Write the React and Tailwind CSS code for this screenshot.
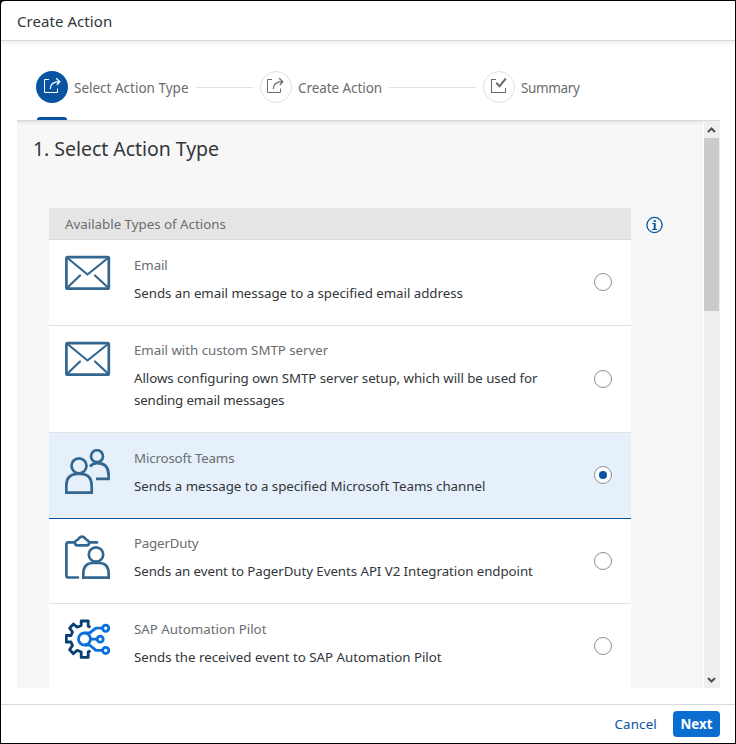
const rows = [
  { icon: 'mail', title: 'Email', lines: ['Sends an email message to a specified email address'], height: 'h-[86px]', pad: 'pt-[14px]', iconPad: 'pt-[15px]', radioPad: 'pt-[33px]', ts: 'tracking-[-0.1px]', ds: ['tracking-[-0.03px]'] },
  { icon: 'mail', title: 'Email with custom SMTP server', lines: ['Allows configuring own SMTP server setup, which will be used for', 'sending email messages'], height: 'h-[107px]', pad: 'pt-[13px]', iconPad: 'pt-[15px]', radioPad: 'pt-[44px]', ts: 'tracking-[-0.03px]', ds: ['tracking-[-0.06px]', 'tracking-[-0.14px]'] },
  { icon: 'teams', title: 'Microsoft Teams', lines: ['Sends a message to a specified Microsoft Teams channel'], height: 'h-[86px]', pad: 'pt-[14px]', iconPad: 'pt-4', radioPad: 'pt-[33px]', selected: true, ts: 'tracking-[-0.15px]', ds: ['tracking-[-0.03px]'] },
  { icon: 'duty', title: 'PagerDuty', lines: ['Sends an event to PagerDuty Events API V2 Integration endpoint'], height: 'h-[85px]', pad: 'pt-[13px]', iconPad: 'pt-[15px]', radioPad: 'pt-[33px]', ts: 'tracking-[-0.2px]', ds: ['tracking-[-0.06px]'] },
  { icon: 'pilot', title: 'SAP Automation Pilot', lines: ['Sends the received event to SAP Automation Pilot'], height: 'h-[84px]', pad: 'pt-[14px]', iconPad: 'pt-[15px]', radioPad: 'pt-[33px]', last: true, ts: 'tracking-normal', ds: ['tracking-normal'] },
];

function Mail() {
  return (
    <svg width="46" height="36" viewBox="0 0 46 36" fill="none" stroke="#346790" strokeWidth="2.7" strokeLinecap="round" strokeLinejoin="round">
      <rect x="1.4" y="2.2" width="42.4" height="31.4" rx="1.2" />
      <path d="M2.5 3 22.5 19.5 43 3M2.5 32.5 15 20.5M43 32.5 30 20.5" strokeWidth="2.2" />
    </svg>
  );
}

function Teams() {
  return (
    <svg width="46" height="46" viewBox="0 0 46 46" fill="none" stroke="#346790" strokeWidth="2.7">
      <circle cx="14" cy="16.8" r="7.5" />
      <path d="M1.3 43.6V37Q1.3 25 12 25H16Q26.7 25 26.7 37V43.6Z" />
      <circle cx="32" cy="7.2" r="6" />
      <path d="M25 17.5Q28 14.2 32 14.2Q43.6 14.2 43.6 26V29.8H31" />
    </svg>
  );
}

function Duty() {
  return (
    <svg width="46" height="46" viewBox="0 0 46 46" fill="none" stroke="#346790" strokeWidth="2.7" strokeLinecap="round">
      <path d="M13 43.5H3.5Q1.4 43.5 1.4 41.5V10.5Q1.4 8.4 3.5 8.4H9M25 8.4H32" />
      <path d="M10 8.5C10 6 13 6.5 14 4.2Q17 1 20 4.2C21 6.5 24.5 6 24 9Q24 11.4 21.5 11.4H12.5Q10 11.4 10 8.5Z" />
      <circle cx="31" cy="20.5" r="7.2" />
      <path d="M18.3 43.6V40Q18.3 29 28 29H34Q43.7 29 43.7 40V43.6Z" strokeLinecap="butt" />
    </svg>
  );
}

function Pilot() {
  return (
    <svg width="46" height="40" viewBox="0 0 46 40" fill="none" strokeWidth="2.8" strokeLinejoin="round">
      <path stroke="#0a3f73" d="M25.5 8.2 23.2 7.2V2H16.2V6.5L12.2 8.2 8.4 5 4.6 9.2 7.5 13 6 16.5H1.3V23H6L7.5 26.6 4.6 30.5 8.4 34.8 12.2 31.3 16.2 33V38.4H23.2V33L25.5 31.8" />
      <g stroke="#0a70db">
        <circle cx="19.5" cy="20" r="6" />
        <circle cx="40.7" cy="9.2" r="3.1" />
        <circle cx="35.2" cy="20.2" r="3" />
        <circle cx="40.7" cy="31.4" r="3.1" />
        <path d="M25.5 20.2H32M20 14H24.5L31 9.2H37.5M20 26H24.5L31 31.4H37.5" />
      </g>
    </svg>
  );
}

const icons = { mail: Mail, teams: Teams, duty: Duty, pilot: Pilot };

function ShareIcon({ viewBox = '0 0 18 18' }) {
  return (
    <svg width="18" height="18" viewBox={viewBox} fill="none" stroke="currentColor" strokeWidth="1">
      <path d="M6 2.5H1.5V15.5H14.5V11.5" />
      <path d="M7.3 12Q7.3 4.7 16.5 4.7M13.2 1.2 16.8 4.7 13.8 8" strokeWidth="1.3" />
    </svg>
  );
}

function ShareIconShifted() {
  return <ShareIcon viewBox="1 0 18 18" />;
}

function CheckIcon() {
  return (
    <svg width="18" height="18" viewBox="0 0 18 18" fill="none" stroke="currentColor" strokeWidth="1.1">
      <path d="M6 2.5H1.5V15.5H15.5V11" />
      <path d="M6.2 5.8 9.6 9.2 15.8 1.5" strokeWidth="2" />
    </svg>
  );
}

function Step({ active, label, Icon, className, tracking }) {
  return (
    <div className={'flex items-center ' + className}>
      <span className={'flex h-8 w-8 shrink-0 items-center justify-center rounded-full pb-0.5 ' + (active ? 'bg-[#0854a0] text-white' : 'border border-[#e0e0e0] text-[#6a6d70]')}>
        <Icon />
      </span>
      <span className={'ml-1.5 pt-0.5 text-[13.5px] leading-5 text-[#6a6d70] ' + tracking}>{label}</span>
    </div>
  );
}

function Radio({ checked }) {
  return (
    <span className="flex h-[18px] w-[18px] items-center justify-center rounded-full border border-[#89919a] bg-white">
      {checked && <span className="h-2 w-2 rounded-full bg-[#0854a0]" />}
    </span>
  );
}

function Row({ row }) {
  const Icon = icons[row.icon];
  return (
    <div className={'flex border-b ' + row.height + ' ' + (row.selected ? 'border-[#0854a0] bg-[#e5f0fa]' : row.last ? 'border-transparent bg-white' : 'border-[#e0e0e0] bg-white')}>
      <div className={'w-[85px] shrink-0 pl-4 ' + row.iconPad}><Icon /></div>
      <div className={'w-[460px] shrink-0 text-[13.3px] leading-[22px] whitespace-nowrap ' + row.pad}>
        <div><span className={'text-[#6a6d70] ' + row.ts}>{row.title}</span></div>
        <div className="pt-1.5 text-[#32363a]">
          {row.lines.map((l, i) => <div key={l}><span className={row.ds[i]}>{l}</span></div>)}
        </div>
      </div>
      <div className={row.radioPad}><Radio checked={row.selected} /></div>
    </div>
  );
}

export default function App() {
  return (
    <div className="h-[744px] w-[736px] bg-black p-px font-['Noto_Sans',sans-serif] text-[#32363a]">
      <div className="flex h-[742px] w-[734px] flex-col overflow-hidden rounded-tl bg-white">
        <header className="flex h-10 shrink-0 items-center border-b border-[#d9d9d9] pt-0.5 pl-4 text-[15px] tracking-[0.06px] shadow-[0_2px_4px_rgba(0,0,0,0.08)]">
          <span>Create Action</span>
        </header>
        <nav className="mr-[15px] ml-4 flex h-20 shrink-0 flex-col border-b border-[#d9d9d9]">
          <div className="flex h-[77px] items-start pt-[30px] pl-[19px]">
            <Step active label="Select Action Type" Icon={ShareIcon} className="w-[160px]" tracking="tracking-normal" />
            <span className="mt-4 h-px w-[57px] bg-[#e0e0e0]" />
            <Step label="Create Action" Icon={ShareIconShifted} className="ml-[7px] w-[129px]" tracking="tracking-[-0.07px]" />
            <span className="mt-4 h-px w-[87px] bg-[#e0e0e0]" />
            <Step label="Summary" Icon={CheckIcon} className="ml-[7px]" tracking="tracking-[-0.35px]" />
          </div>
          <span className="ml-5 h-[3px] w-[30px] shrink-0 rounded-t-sm bg-[#0854a0]" />
        </nav>
        <main className="mr-[15px] ml-4 flex h-[567px] shrink-0 bg-[#f7f7f7] shadow-[inset_0_3px_3px_-1px_rgba(0,0,0,0.08)]">
          <div className="w-[686px] shrink-0">
            <h1 className="h-[87px] pt-[13px] pl-4 text-[19.5px] leading-[30px] tracking-[-0.04px]"><span>1. Select Action Type</span></h1>
            <div className="flex pl-8">
              <section className="w-[582px]">
                <div className="flex h-8 items-center border-b border-[#d9d9d9] bg-[#e5e5e5] pt-0.5 pl-4 text-[13.3px] text-[#6a6d70]"><span>Available Types of Actions</span></div>
                {rows.map((r) => <Row key={r.title} row={r} />)}
              </section>
              <svg className="mt-2 ml-[15px]" width="18" height="18" viewBox="0 0 18 18" fill="none" stroke="#0854a0" strokeWidth="1.3">
                <circle cx="8.5" cy="9" r="7.6" />
                <path d="M6 13.5H11.2M6.2 7.5H8.7" strokeWidth="1" />
                <path d="M8.7 7V13.5M7.7 5H9.7" strokeWidth="2" />
              </svg>
            </div>
          </div>
          <div className="flex w-[17px] flex-col border-l border-white bg-[#efefef]">
            <svg width="16" height="17" viewBox="0 0 16 17" fill="none" stroke="#505050" strokeWidth="2"><path d="M4 11 7.5 7.5 11 11" /></svg>
            <div className="h-[173px] w-[15px] bg-[#cbcbcb]" />
            <svg className="mt-auto" width="16" height="17" viewBox="0 0 16 17" fill="none" stroke="#505050" strokeWidth="2"><path d="M4 7 7.5 10.5 11 7" /></svg>
          </div>
        </main>
        <footer className="mt-4 flex flex-1 items-center justify-end border-t border-[#d9d9d9] pr-[15px] text-[13.3px]">
          <button className="mr-4 pt-0.5 tracking-[0.2px] text-[#0854a0]">Cancel</button>
          <button className="h-[26px] w-[47px] rounded-[4px] bg-[#0a6ed1] pt-0.5 font-bold text-white">Next</button>
        </footer>
      </div>
    </div>
  );
}
